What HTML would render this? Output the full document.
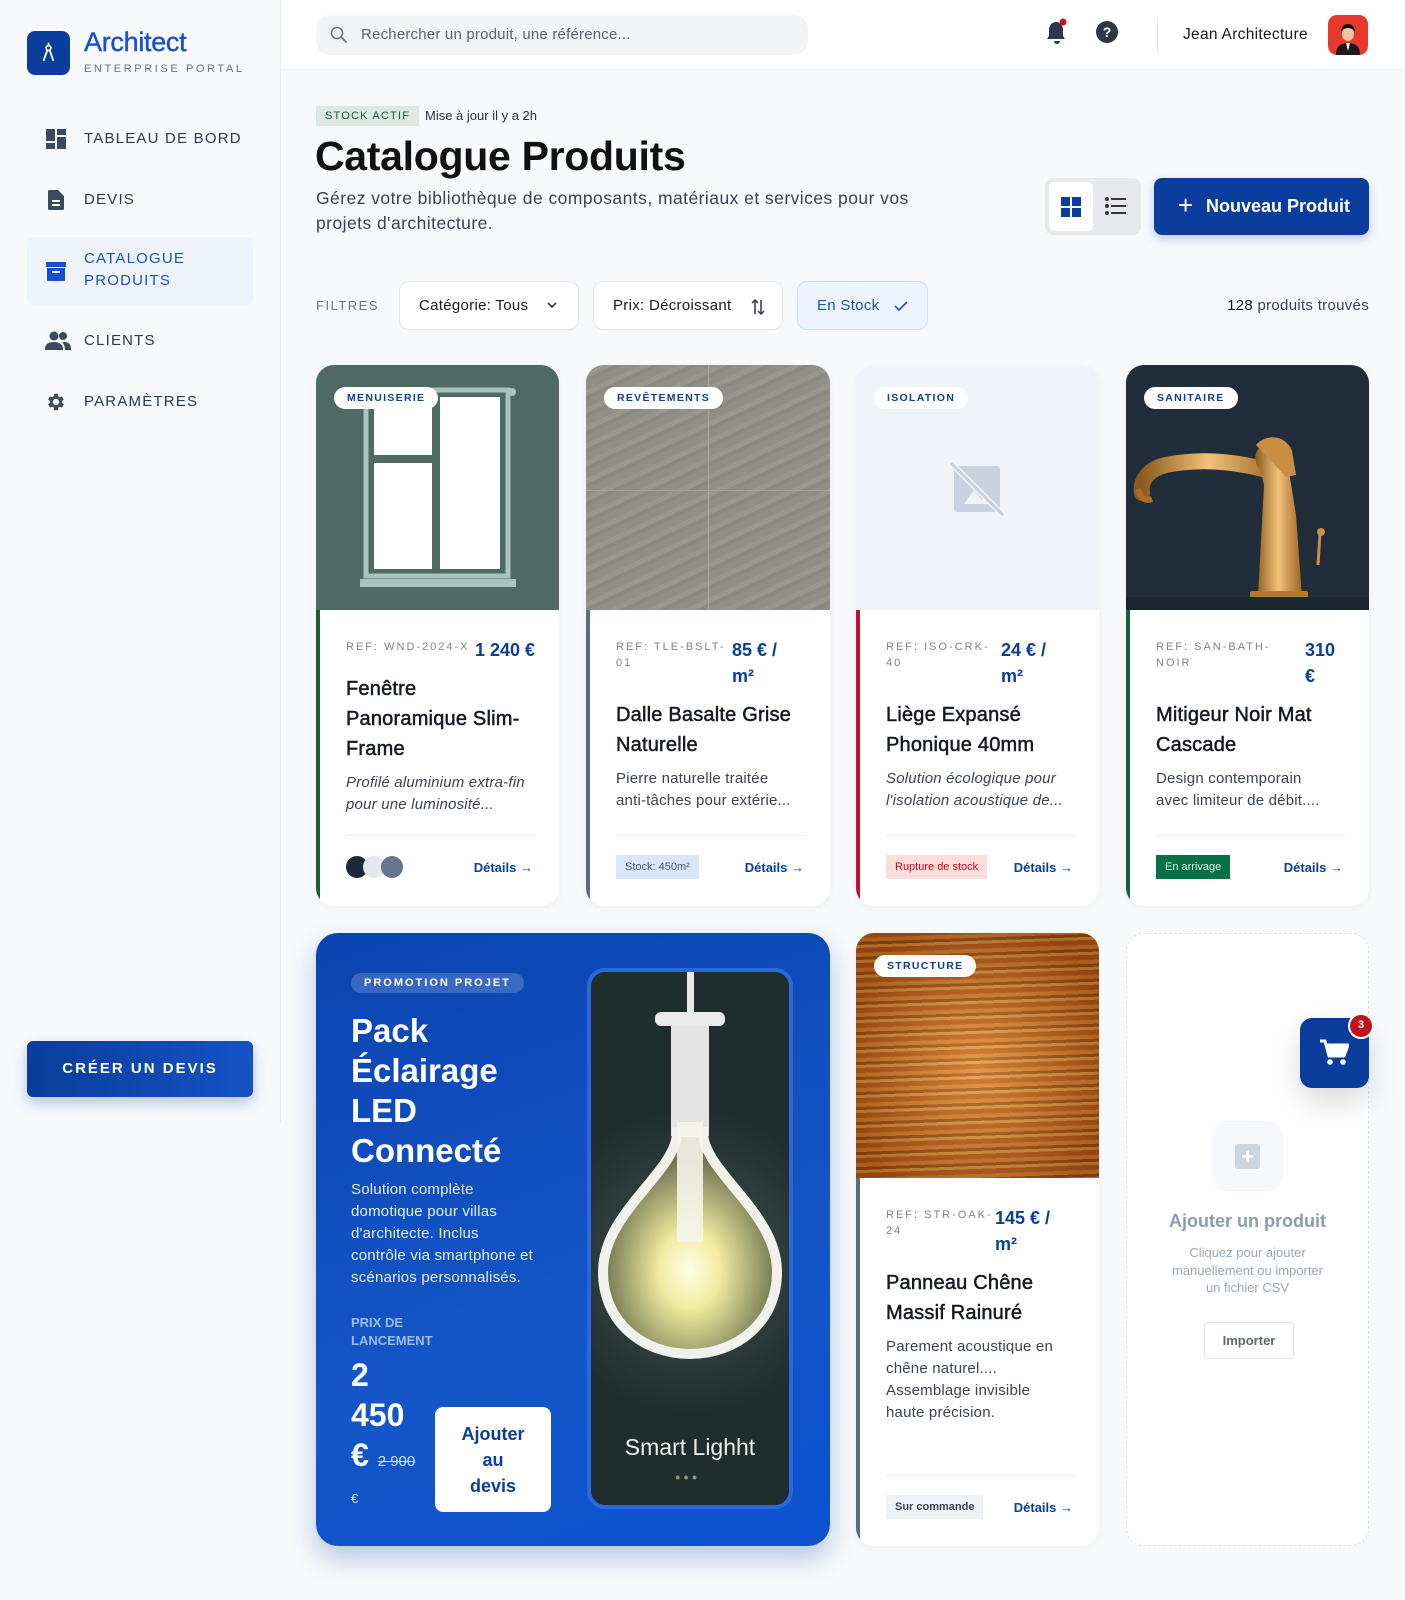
<!DOCTYPE html>
<html><head><meta charset="utf-8">
<style>
*{box-sizing:border-box;margin:0;padding:0}
body{width:1405px;height:1600px;background:#f7f9fb;font-family:"Liberation Sans",Arial,sans-serif;position:relative;overflow:hidden;color:#141a22}
.abs{position:absolute}
.side{left:0;top:0;width:281px;height:1123px;background:#f7f9fb;border-right:1px solid #e8ebef}
.nav{position:absolute;left:27px;width:226px;display:flex;align-items:center;font-size:15px;letter-spacing:1.2px;color:#2b3a4f}
.nav svg{position:absolute;left:18px}
.nav span{position:absolute;left:57px;line-height:22px}
.header{left:281px;top:0;width:1124px;height:70px;background:#fff;border-bottom:1px solid #eceff2}
.card{position:absolute;background:#fff;border-radius:18px;overflow:hidden;box-shadow:0 2px 8px rgba(20,30,50,.05)}
.img{position:absolute;left:0;top:0;width:100%;height:245px;overflow:hidden}
.tag{position:absolute;left:18px;top:22px;background:#fff;border-radius:12px;padding:0 13px;height:22px;line-height:22px;font-size:10.5px;font-weight:bold;letter-spacing:1.3px;color:#0a3d9c}
.acc{position:absolute;left:0;width:4px;bottom:0}
.body{position:absolute;left:30px;right:24px;top:272px}
.row{display:flex;justify-content:space-between}
.ref{font-size:11px;letter-spacing:2px;color:#7b828e;line-height:16px;margin-top:2px;white-space:nowrap}
.price{font-size:18px;font-weight:bold;color:#0a3d9c;line-height:26px;white-space:nowrap}
.ttl{font-size:20px;line-height:30px;margin-top:11px;color:#141a22;white-space:nowrap;-webkit-text-stroke:.5px #141a22;letter-spacing:.2px}
.desc{font-size:15px;line-height:22px;color:#3a4350;margin-top:8px;white-space:nowrap;letter-spacing:.2px}
.div{position:absolute;left:30px;right:24px;bottom:70px;border-top:1px solid #eceef1}
.foot{position:absolute;left:30px;right:26px;bottom:26px;height:26px;display:flex;justify-content:space-between;align-items:center}
.det{font-size:13px;font-weight:bold;color:#0a3d9c}
.pill{font-size:11px;font-weight:bold;padding:0 9px;height:24px;line-height:24px}
</style></head><body>

<!-- Sidebar -->
<div class="abs side">
  <div class="abs" style="left:27px;top:31px;width:43px;height:44px;background:#0a3d9c;border-radius:8px">
    <svg width="43" height="44" viewBox="0 0 43 44"><circle cx="21.5" cy="17" r="2.4" fill="none" stroke="#fff" stroke-width="1.6"/><path d="M21.5 12.5v2.2M20.3 19.2l-3.5 10M22.7 19.2l3.5 10" stroke="#fff" stroke-width="1.8" fill="none" stroke-linecap="round"/></svg>
  </div>
  <div class="abs" style="left:84px;top:27px;font-size:27px;color:#1a4fd0;letter-spacing:-.3px;-webkit-text-stroke:.4px #1a4fd0">Architect</div>
  <div class="abs" style="left:84px;top:63px;font-size:11px;letter-spacing:2.6px;color:#6b7480">ENTERPRISE PORTAL</div>

  <div class="nav" style="top:128px;height:22px">
    <svg width="22" height="22" viewBox="0 0 22 22"><path d="M1 1h9v12H1zM12 1h9v6h-9zM12 9h9v12h-9zM1 15h9v6H1z" fill="#3b4a5e"/></svg>
    <span>TABLEAU DE BORD</span></div>
  <div class="nav" style="top:189px;height:22px">
    <svg width="22" height="22" viewBox="0 0 22 22"><path d="M4 1h9l6 6v13a1 1 0 0 1-1 1H4a1 1 0 0 1-1-1V2a1 1 0 0 1 1-1z" fill="#3b4a5e"/><path d="M7 12h8M7 16h8" stroke="#fff" stroke-width="2"/></svg>
    <span>DEVIS</span></div>
  <div class="nav" style="top:237px;height:68px;background:#eef3fc;border-radius:6px;color:#1a4fd0">
    <svg width="22" height="22" viewBox="0 0 22 22"><rect x="1" y="2" width="20" height="5" rx="1" fill="#1a4fd0"/><rect x="2" y="8" width="18" height="13" rx="1" fill="#1a4fd0"/><rect x="7" y="11" width="8" height="2" fill="#fff"/></svg>
    <span style="top:11px">CATALOGUE<br>PRODUITS</span></div>
  <div class="nav" style="top:330px;height:22px">
    <svg width="26" height="22" viewBox="0 0 26 22"><circle cx="9" cy="6" r="4.5" fill="#3b4a5e"/><circle cx="18" cy="6" r="4" fill="#3b4a5e"/><path d="M0 19c0-5 4-7 9-7s9 2 9 7v1H0zM19 12c4 0 7 2 7 6v2h-6c0-3-1-6-3-8z" fill="#3b4a5e"/></svg>
    <span>CLIENTS</span></div>
  <div class="nav" style="top:391px;height:22px">
    <svg width="22" height="22" viewBox="0 0 24 24"><path fill="#3b4a5e" d="M19.4 13a7.5 7.5 0 0 0 0-2l2.1-1.6-2-3.5-2.5 1a7 7 0 0 0-1.7-1L15 3h-4l-.4 2.8a7 7 0 0 0-1.7 1l-2.5-1-2 3.5L6.6 11a7.5 7.5 0 0 0 0 2l-2.1 1.6 2 3.5 2.5-1a7 7 0 0 0 1.7 1L11 21h4l.4-2.8a7 7 0 0 0 1.7-1l2.5 1 2-3.5zM13 15.5a3.5 3.5 0 1 1 0-7 3.5 3.5 0 0 1 0 7z" transform="translate(-1 0)"/></svg>
    <span>PARAMÈTRES</span></div>

  <div class="abs" style="left:27px;top:1041px;width:226px;height:56px;background:linear-gradient(90deg,#0a3d9c,#1452c4);border-radius:6px;box-shadow:0 6px 14px rgba(10,61,156,.28);color:#fff;font-size:15px;font-weight:bold;letter-spacing:2px;text-align:center;line-height:56px">CRÉER UN DEVIS</div>
</div>

<!-- Header -->
<div class="abs header">
  <div class="abs" style="left:35px;top:15px;width:492px;height:40px;background:#f2f4f6;border-radius:14px">
    <svg class="abs" style="left:14px;top:11px" width="18" height="18" viewBox="0 0 18 18"><circle cx="7" cy="7" r="5.5" fill="none" stroke="#6b7480" stroke-width="1.6"/><path d="M11 11l5.5 5.5" stroke="#6b7480" stroke-width="1.8"/></svg>
    <div class="abs" style="left:45px;top:11px;font-size:15px;color:#5d6570;letter-spacing:.2px">Rechercher un produit, une référence...</div>
  </div>
  <svg class="abs" style="left:763px;top:18px" width="26" height="28" viewBox="0 0 26 28"><path d="M11 4c-4 1-6 4-6 8v6l-2 3h18l-2-3v-6c0-4-2-7-6-8z" fill="#2e3744"/><path d="M10 23h6a3 3 0 0 1-6 0z" fill="#2e3744"/><circle cx="19" cy="4" r="3.5" fill="#c8102e"/></svg>
  <svg class="abs" style="left:815px;top:21px" width="22" height="22" viewBox="0 0 22 22"><circle cx="11" cy="11" r="11" fill="#2e3744"/><text x="11" y="16" text-anchor="middle" font-family="Liberation Sans" font-weight="bold" font-size="14" fill="#fff">?</text></svg>
  <div class="abs" style="left:876px;top:17px;width:1px;height:36px;background:#e4e7eb"></div>
  <div class="abs" style="left:902px;top:26px;font-size:15.5px;color:#141a22;letter-spacing:.3px">Jean Architecture</div>
  <div class="abs" style="left:1047px;top:15px;width:40px;height:40px;background:#e53a2b;border-radius:9px;overflow:hidden">
    <svg width="40" height="40" viewBox="0 0 40 40"><path d="M8 40c0-9 5-12 12-12s12 3 12 12z" fill="#1b1b1b"/><path d="M18 28l2 8 2-8z" fill="#fff"/><ellipse cx="20" cy="19" rx="6" ry="7" fill="#f1c6a0"/><path d="M13 17c0-6 4-8 7-8s7 2 7 8c-2-3-5-4-7-4s-5 1-7 4z" fill="#111"/></svg>
  </div>
</div>

<!-- Title area -->
<div class="abs" style="left:316px;top:106px;height:20px;line-height:20px;padding:0 9px;background:#dde8e2;color:#1a5c3a;font-size:11px;letter-spacing:1.2px;border-radius:2px">STOCK ACTIF</div>
<div class="abs" style="left:425px;top:108px;font-size:13px;color:#2b3340">Mise à jour il y a 2h</div>
<div class="abs" style="left:315px;top:133px;font-size:41px;font-weight:bold;letter-spacing:-.3px;color:#111">Catalogue Produits</div>
<div class="abs" style="left:316px;top:186px;font-size:17.5px;line-height:25px;color:#3a4350;letter-spacing:.45px">Gérez votre bibliothèque de composants, matériaux et services pour vos<br>projets d'architecture.</div>

<div class="abs" style="left:1045px;top:178px;width:96px;height:57px;background:#e7e9ec;border-radius:8px">
  <div class="abs" style="left:4px;top:4px;width:44px;height:49px;background:#fff;border-radius:5px"></div>
  <svg class="abs" style="left:16px;top:19px" width="20" height="20" viewBox="0 0 20 20"><path d="M0 0h9v9H0zM11 0h9v9h-9zM0 11h9v9H0zM11 11h9v9h-9z" fill="#0a3d9c"/></svg>
  <svg class="abs" style="left:60px;top:18px" width="22" height="20" viewBox="0 0 22 20"><circle cx="2" cy="3" r="2" fill="#2e3744"/><circle cx="2" cy="10" r="2" fill="#2e3744"/><circle cx="2" cy="17" r="2" fill="#2e3744"/><path d="M6 3h15M6 10h15M6 17h15" stroke="#2e3744" stroke-width="2"/></svg>
</div>
<div class="abs" style="left:1154px;top:178px;width:215px;height:57px;background:#0a3d9c;border-radius:8px;box-shadow:0 4px 10px rgba(10,61,156,.25);color:#fff;font-size:18px;font-weight:bold;line-height:57px">
  <span style="position:absolute;left:24px;font-size:26px;font-weight:normal;top:-1px">+</span><span style="position:absolute;left:52px">Nouveau Produit</span></div>

<!-- Filters -->
<div class="abs" style="left:316px;top:298px;font-size:13px;letter-spacing:1.5px;color:#6b7480">FILTRES</div>
<div class="abs" style="left:399px;top:281px;width:180px;height:49px;background:#fff;border:1px solid #e3e6ea;border-radius:10px;font-size:15px;line-height:47px;padding-left:19px;letter-spacing:.3px">Catégorie: Tous<svg class="abs" style="left:147px;top:20px" width="10" height="7" viewBox="0 0 10 7"><path d="M1 1l4 4 4-4" fill="none" stroke="#2e3744" stroke-width="1.6"/></svg></div>
<div class="abs" style="left:593px;top:281px;width:190px;height:49px;background:#fff;border:1px solid #e3e6ea;border-radius:10px;font-size:15px;line-height:47px;padding-left:19px;letter-spacing:.3px">Prix: Décroissant<svg class="abs" style="left:157px;top:16px" width="14" height="18" viewBox="0 0 14 18"><path d="M4 16V2M1 5l3-3 3 3M10 2v14M7 13l3 3 3-3" fill="none" stroke="#2e3744" stroke-width="1.5"/></svg></div>
<div class="abs" style="left:797px;top:281px;width:131px;height:49px;background:#eef4ff;border:1px solid #cfe0fb;border-radius:10px;font-size:15px;line-height:47px;padding-left:19px;color:#1a4fd0;letter-spacing:.3px">En Stock<svg class="abs" style="left:96px;top:19px" width="14" height="10" viewBox="0 0 14 10"><path d="M1 5l4 4 8-8" fill="none" stroke="#1a4fd0" stroke-width="1.6"/></svg></div>
<div class="abs" style="right:36px;top:297px;font-size:15px;color:#3a4350;letter-spacing:.3px"><b style="color:#141a22;font-weight:normal">128</b> produits trouvés</div>

<!-- Row 1 cards -->
<div class="card" style="left:316px;top:365px;width:243px;height:541px">
  <div class="img" style="background:#4f6a63">
    <svg width="243" height="245" viewBox="0 0 243 245"><rect x="50" y="25" width="142" height="186" fill="none" stroke="#a9c3bd" stroke-width="5"/><rect x="58" y="32" width="58" height="58" fill="#fff"/><rect x="58" y="98" width="58" height="106" fill="#fff"/><rect x="124" y="32" width="60" height="172" fill="#fff"/><circle cx="196" cy="27" r="4" fill="#a9c3bd"/><rect x="44" y="214" width="156" height="8" fill="#a9c3bd"/></svg>
    <div class="tag">MENUISERIE</div></div>
  <div class="acc" style="top:245px;background:#1e5c3a"></div>
  <div class="body">
    <div class="row"><div class="ref">REF: WND-2024-X</div><div class="price">1 240 €</div></div>
    <div class="ttl">Fenêtre<br>Panoramique Slim-<br>Frame</div>
    <div class="desc" style="font-style:italic">Profilé aluminium extra-fin<br>pour une luminosité...</div>
  </div>
  <div class="div"></div>
  <div class="foot"><div style="position:relative;width:60px;height:22px"><span class="abs" style="left:0;width:22px;height:22px;border-radius:50%;background:#1e2938"></span><span class="abs" style="left:17px;width:22px;height:22px;border-radius:50%;background:#e4e8ee"></span><span class="abs" style="left:35px;width:22px;height:22px;border-radius:50%;background:#66758d"></span></div><div class="det">Détails →</div></div>
</div>

<div class="card" style="left:586px;top:365px;width:244px;height:541px">
  <div class="img" style="background:repeating-linear-gradient(155deg,#8f8f88 0 7px,#979790 7px 12px,#8a8a83 12px 16px),#8e8e86"><div class="abs" style="left:122px;top:0;width:1px;height:245px;background:#aaa9a2"></div><div class="abs" style="left:0;top:125px;width:244px;height:1px;background:#a3a29b"></div>
    <div class="tag">REVÊTEMENTS</div></div>
  <div class="acc" style="top:245px;background:#5a6b85"></div>
  <div class="body">
    <div class="row"><div class="ref">REF: TLE-BSLT-<br>01</div><div class="price" style="width:74px">85 € /<br>m²</div></div>
    <div class="ttl">Dalle Basalte Grise<br>Naturelle</div>
    <div class="desc">Pierre naturelle traitée<br>anti-tâches pour extérie...</div>
  </div>
  <div class="div"></div>
  <div class="foot"><div class="pill" style="background:#dbe6fb;color:#4a5568;font-weight:normal">Stock: 450m²</div><div class="det">Détails →</div></div>
</div>

<div class="card" style="left:856px;top:365px;width:243px;height:541px">
  <div class="img" style="background:#eff2f7">
    <svg class="abs" style="left:92px;top:95px" width="58" height="58" viewBox="0 0 58 58"><rect x="6" y="6" width="46" height="46" rx="3" fill="#c9d3e0"/><path d="M16 44l10-14 8 10 5-6 7 10z" fill="#eff2f7"/><path d="M3 3l52 52" stroke="#eff2f7" stroke-width="6"/><path d="M3 3l52 52" stroke="#c9d3e0" stroke-width="3"/></svg>
    <div class="tag">ISOLATION</div></div>
  <div class="acc" style="top:245px;background:#c8102e"></div>
  <div class="body">
    <div class="row"><div class="ref">REF: ISO-CRK-<br>40</div><div class="price" style="width:74px">24 € /<br>m²</div></div>
    <div class="ttl">Liège Expansé<br>Phonique 40mm</div>
    <div class="desc" style="font-style:italic">Solution écologique pour<br>l'isolation acoustique de...</div>
  </div>
  <div class="div"></div>
  <div class="foot"><div class="pill" style="background:#fddcdc;color:#b3121f;font-weight:normal">Rupture de stock</div><div class="det">Détails →</div></div>
</div>

<div class="card" style="left:1126px;top:365px;width:243px;height:541px">
  <div class="img" style="background:#212d3b">
    <div class="abs" style="left:0;top:232px;width:243px;height:13px;background:#1c2631"></div>
    <svg width="243" height="245" viewBox="0 0 243 245"><defs><linearGradient id="g" x1="0" x2="1"><stop offset="0" stop-color="#8a5a1c"/><stop offset=".5" stop-color="#f2c27a"/><stop offset="1" stop-color="#9b6422"/></linearGradient></defs>
    <path d="M150 108 C120 98 80 92 40 100 C22 104 14 116 16 128" fill="none" stroke="url(#g)" stroke-width="16" stroke-linecap="round"/>
    <path d="M12 124 q4 14 14 10" fill="none" stroke="#a86e28" stroke-width="6"/>
    <path d="M132 232 L176 232 L170 150 L162 100 C160 84 152 78 140 80 C128 82 126 96 134 104 L138 120 Z" fill="url(#g)"/>
    <path d="M130 80 C140 68 160 70 166 86 L170 110 L160 112 Z" fill="#c88f44"/>
    <rect x="124" y="226" width="58" height="8" rx="2" fill="#b07a30"/><path d="M192 200l2-32" stroke="#c89040" stroke-width="3"/><circle cx="195" cy="167" r="4" fill="#c89040"/></svg>
    <div class="tag">SANITAIRE</div></div>
  <div class="acc" style="top:245px;background:#1b5e3b"></div>
  <div class="body">
    <div class="row"><div class="ref">REF: SAN-BATH-<br>NOIR</div><div class="price" style="width:40px">310<br>€</div></div>
    <div class="ttl">Mitigeur Noir Mat<br>Cascade</div>
    <div class="desc">Design contemporain<br>avec limiteur de débit....</div>
  </div>
  <div class="div"></div>
  <div class="foot"><div class="pill" style="background:#087046;color:#d6f5e4;font-weight:normal">En arrivage</div><div class="det">Détails →</div></div>
</div>

<!-- Promo -->
<div class="abs" style="left:316px;top:933px;width:514px;height:613px;border-radius:22px;background:linear-gradient(160deg,#0a44b0 0%,#1456c8 60%,#0b52d0 100%);box-shadow:0 12px 26px rgba(10,61,156,.28);overflow:hidden;color:#fff">
  <div class="abs" style="left:35px;top:40px;height:20px;line-height:20px;padding:0 13px;background:rgba(255,255,255,.18);border-radius:10px;font-size:11px;font-weight:bold;letter-spacing:2px">PROMOTION PROJET</div>
  <div class="abs" style="left:35px;top:78px;font-size:33px;font-weight:bold;line-height:40px">Pack<br>Éclairage<br>LED<br>Connecté</div>
  <div class="abs" style="left:35px;top:246px;font-size:15px;line-height:22px;color:#e6eeff;letter-spacing:.2px">Solution complète<br>domotique pour villas<br>d'architecte. Inclus<br>contrôle via smartphone et<br>scénarios personnalisés.</div>
  <div class="abs" style="left:35px;top:381px;font-size:13px;line-height:18px;color:#9fbcf0;font-weight:bold">PRIX DE<br>LANCEMENT</div>
  <div class="abs" style="left:35px;top:422px;font-size:32px;font-weight:bold;line-height:40px">2<br>450<br>€ <span style="font-size:15px;font-weight:normal;text-decoration:line-through;color:#cfe0ff">2 900</span></div>
  <div class="abs" style="left:35px;top:558px;font-size:13px;color:#cfe0ff">€</div>
  <div class="abs" style="left:119px;top:474px;width:116px;height:105px;background:#fff;border-radius:8px;color:#0a3d9c;font-size:18px;font-weight:bold;text-align:center;line-height:26px;padding-top:14px">Ajouter<br>au<br>devis</div>
  <div class="abs" style="left:271px;top:35px;width:206px;height:541px;border:4px solid #2c68dc;border-radius:18px;background:#1f2d2d;overflow:hidden">
    <div class="abs" style="left:-60px;top:140px;width:320px;height:300px;border-radius:50%;background:radial-gradient(circle,rgba(90,110,100,.6),rgba(31,45,45,0) 70%)"></div>
    <svg class="abs" style="left:0;top:0" width="198" height="533" viewBox="0 0 198 533"><defs><radialGradient id="b" cx=".5" cy=".62" r=".5"><stop offset="0" stop-color="#fffde8"/><stop offset=".35" stop-color="#f2eba0"/><stop offset="1" stop-color="#6e7550"/></radialGradient></defs>
      <rect x="96" y="0" width="7" height="45" fill="#e8e8e8"/><rect x="64" y="40" width="70" height="14" rx="6" fill="#eaeaea"/><rect x="80" y="54" width="38" height="110" fill="#e3e3e3"/>
      <path d="M86 160c0 40-74 80-74 140 0 50 40 82 87 82s87-32 87-82c0-60-74-100-74-140z" fill="url(#b)" stroke="#f1f1ec" stroke-width="10"/>
      <rect x="86" y="150" width="26" height="120" fill="#f4f4ea" opacity=".9"/></svg>
    <div class="abs" style="left:0;width:198px;top:462px;text-align:center;font-size:23px;color:#eef0ea">Smart Lighht</div>
    <div class="abs" style="left:84px;top:500px;font-size:9px;color:#8a9a6a;letter-spacing:3px">●●●</div>
  </div>
</div>

<!-- Row2 card3 -->
<div class="card" style="left:856px;top:933px;width:243px;height:613px">
  <div class="img" style="background:repeating-linear-gradient(178deg,#b55a18 0 5px,#d7822e 5px 9px,#9c4a12 9px 12px,#e09a45 12px 15px)">
    <div class="abs" style="inset:0;background:radial-gradient(ellipse at 50% 55%,rgba(255,200,120,.35),rgba(80,30,0,.35) 80%)"></div>
    <div class="tag">STRUCTURE</div></div>
  <div class="acc" style="top:245px;background:#5a6b85"></div>
  <div class="body">
    <div class="row"><div class="ref">REF: STR-OAK-<br>24</div><div class="price" style="width:80px">145 € /<br>m²</div></div>
    <div class="ttl">Panneau Chêne<br>Massif Rainuré</div>
    <div class="desc">Parement acoustique en<br>chêne naturel....<br>Assemblage invisible<br>haute précision.</div>
  </div>
  <div class="div"></div>
  <div class="foot"><div class="pill" style="background:#eef1f5;color:#3a4350">Sur commande</div><div class="det">Détails →</div></div>
</div>

<!-- Placeholder -->
<div class="abs" style="left:1126px;top:933px;width:243px;height:613px;border:1.5px dashed #dfe3e9;border-radius:18px;background:#fff">
  <div class="abs" style="left:85px;top:187px;width:71px;height:70px;background:#f5f7fa;border-radius:14px"><div class="abs" style="left:23px;top:23px;width:25px;height:25px;background:#cbd5e1;border-radius:3px;color:#fff;font-size:22px;line-height:25px;text-align:center;font-weight:bold">+</div></div>
  <div class="abs" style="left:0;width:100%;top:277px;text-align:center;font-size:18px;font-weight:bold;color:#8b9bb1">Ajouter un produit</div>
  <div class="abs" style="left:0;width:100%;top:310px;text-align:center;font-size:13px;line-height:17.5px;color:#98a6b8">Cliquez pour ajouter<br>manuellement ou importer<br>un fichier CSV</div>
  <div class="abs" style="left:77px;top:388px;width:90px;height:37px;border:1px solid #dfe3e9;border-radius:4px;text-align:center;line-height:35px;font-size:13px;font-weight:bold;color:#5d6878">Importer</div>
</div>

<!-- Cart FAB -->
<div class="abs" style="left:1300px;top:1018px;width:69px;height:70px;background:#0a3d9c;border-radius:12px;box-shadow:0 14px 30px rgba(0,0,0,.15)">
  <svg class="abs" style="left:19px;top:21px" width="30" height="28" viewBox="0 0 30 28"><path d="M1 2h5l4 15h15l4-11H8" fill="none" stroke="#fff" stroke-width="3" stroke-linejoin="round"/><path d="M9 7h19l-3 9H11z" fill="#fff"/><circle cx="11" cy="23" r="2.8" fill="#fff"/><circle cx="24" cy="23" r="2.8" fill="#fff"/></svg>
  <div class="abs" style="left:48px;top:-5px;width:26px;height:26px;border-radius:50%;background:#c0141c;border:2.5px solid #fff;color:#fff;font-size:11px;font-weight:bold;text-align:center;line-height:21px">3</div>
</div>
</body></html>
